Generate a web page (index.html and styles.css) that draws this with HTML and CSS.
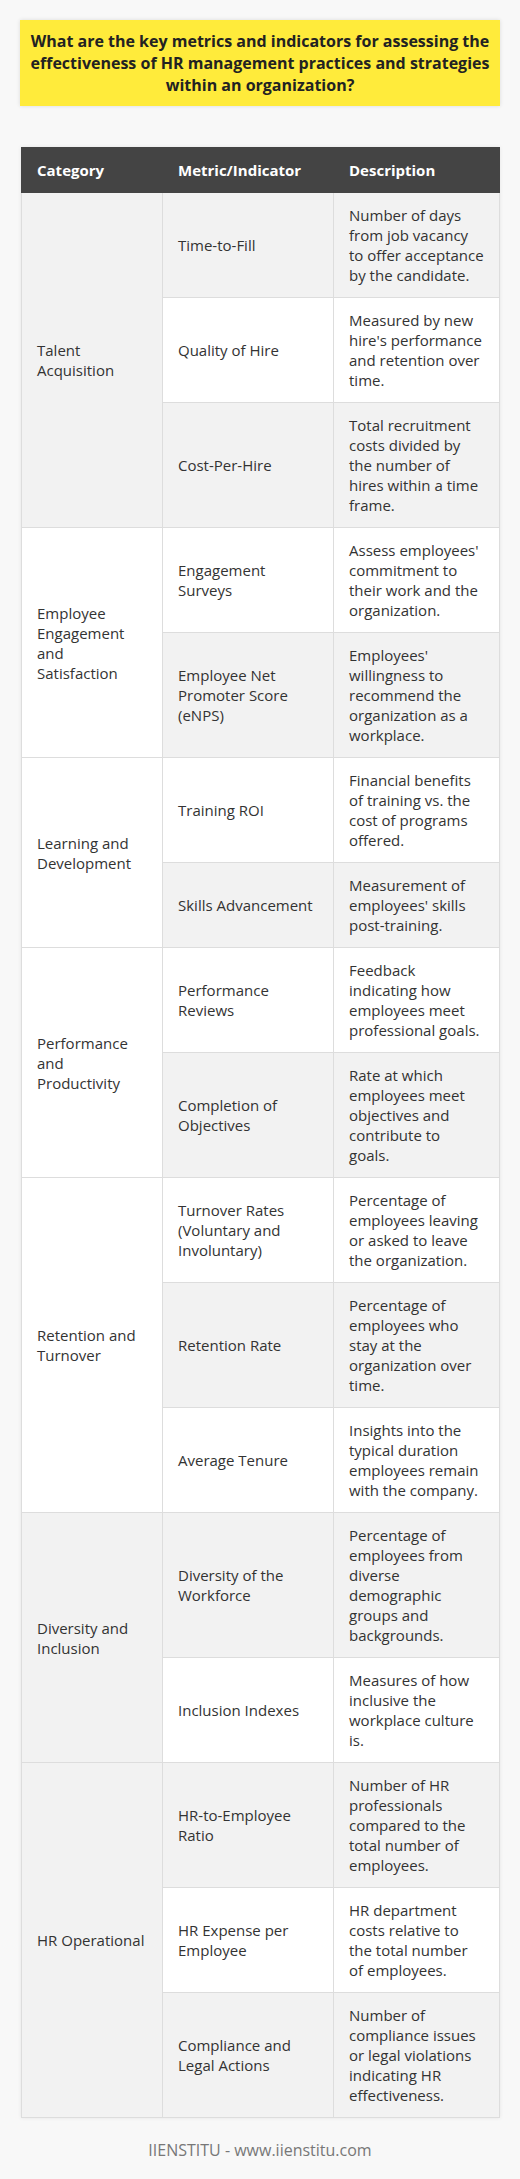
FILE: index.html
```html
<!DOCTYPE html>
<html lang="en">
<head>
<meta charset="utf-8">
<title>HR Metrics</title>
<link rel="stylesheet" href="styles.css">
</head>
<body>
<div class="page">
  <div class="title-box">
    <h1 class="title">What are the key metrics and indicators for assessing the effectiveness of HR management practices and strategies within an organization?</h1>
  </div>
  <table class="metrics">
    <colgroup>
      <col class="c1">
      <col class="c2">
      <col class="c3">
    </colgroup>
    <thead>
      <tr><th>Category</th><th>Metric/Indicator</th><th>Description</th></tr>
    </thead>
    <tbody>
      <tr><td rowspan="3">Talent Acquisition</td><td>Time-to-Fill</td><td>Number of days from job vacancy to offer acceptance by the candidate.</td></tr>
      <tr><td>Quality of Hire</td><td>Measured by new hire's performance and retention over time.</td></tr>
      <tr><td>Cost-Per-Hire</td><td>Total recruitment costs divided by the number of hires within a time frame.</td></tr>
      <tr><td rowspan="2">Employee Engagement and Satisfaction</td><td>Engagement Surveys</td><td>Assess employees' commitment to their work and the organization.</td></tr>
      <tr><td>Employee Net Promoter Score (eNPS)</td><td>Employees' willingness to recommend the organization as a workplace.</td></tr>
      <tr><td rowspan="2">Learning and Development</td><td>Training ROI</td><td>Financial benefits of training vs. the cost of programs offered.</td></tr>
      <tr><td>Skills Advancement</td><td>Measurement of employees' skills post-training.</td></tr>
      <tr><td rowspan="2">Performance and Productivity</td><td>Performance Reviews</td><td>Feedback indicating how employees meet professional goals.</td></tr>
      <tr><td>Completion of Objectives</td><td>Rate at which employees meet objectives and contribute to goals.</td></tr>
      <tr><td rowspan="3">Retention and Turnover</td><td>Turnover Rates (Voluntary and Involuntary)</td><td>Percentage of employees leaving or asked to leave the organization.</td></tr>
      <tr><td>Retention Rate</td><td>Percentage of employees who stay at the organization over time.</td></tr>
      <tr><td>Average Tenure</td><td>Insights into the typical duration employees remain with the company.</td></tr>
      <tr><td rowspan="2">Diversity and Inclusion</td><td>Diversity of the Workforce</td><td>Percentage of employees from diverse demographic groups and backgrounds.</td></tr>
      <tr><td>Inclusion Indexes</td><td>Measures of how inclusive the workplace culture is.</td></tr>
      <tr><td rowspan="3">HR Operational</td><td>HR-to-Employee Ratio</td><td>Number of HR professionals compared to the total number of employees.</td></tr>
      <tr><td>HR Expense per Employee</td><td>HR department costs relative to the total number of employees.</td></tr>
      <tr><td>Compliance and Legal Actions</td><td>Number of compliance issues or legal violations indicating HR effectiveness.</td></tr>
    </tbody>
  </table>
  <p class="footer">IIENSTITU - www.iienstitu.com</p>
</div>
</body>
</html>
```

FILE: styles.css
```css
html, body {
  margin: 0;
  padding: 0;
  background: #f8f8f8;
}
body {
  font-family: "Open Sans", "Liberation Sans", sans-serif;
  color: #333;
}
.page {
  padding: 20px 20px 0 20px;
}
.title-box {
  background: #ffeb3b;
  padding: 10px 10px;
  box-shadow: 0 0 4px rgba(0, 0, 0, 0.12);
}
.title {
  margin: 0;
  font-size: 16px;
  line-height: 22px;
  font-weight: 700;
  text-align: center;
  color: #222;
}
.metrics {
  width: 478px;
  margin: 41px 1px 0 1px;
  border-collapse: collapse;
  table-layout: fixed;
  font-size: 15px;
  line-height: 20px;
  box-shadow: 0 0 4px rgba(0, 0, 0, 0.08);
}
.c1 { width: 141px; }
.c2 { width: 171px; }
.c3 { width: 166px; }
.metrics th,
.metrics td {
  border: 1px solid #dddddd;
  padding: 12px 15px;
  text-align: left;
  vertical-align: middle;
}
.metrics th {
  background: #444444;
  color: #ffffff;
  font-weight: 700;
  border-color: #444444;
}
.metrics tbody tr {
  background: #ffffff;
}
.metrics tbody tr:nth-child(odd) {
  background: #f2f2f2;
}
.footer {
  margin: 0;
  padding: 22px 0 21px;
  text-align: center;
  font-size: 16px;
  line-height: 20px;
  color: #777;
}
```
